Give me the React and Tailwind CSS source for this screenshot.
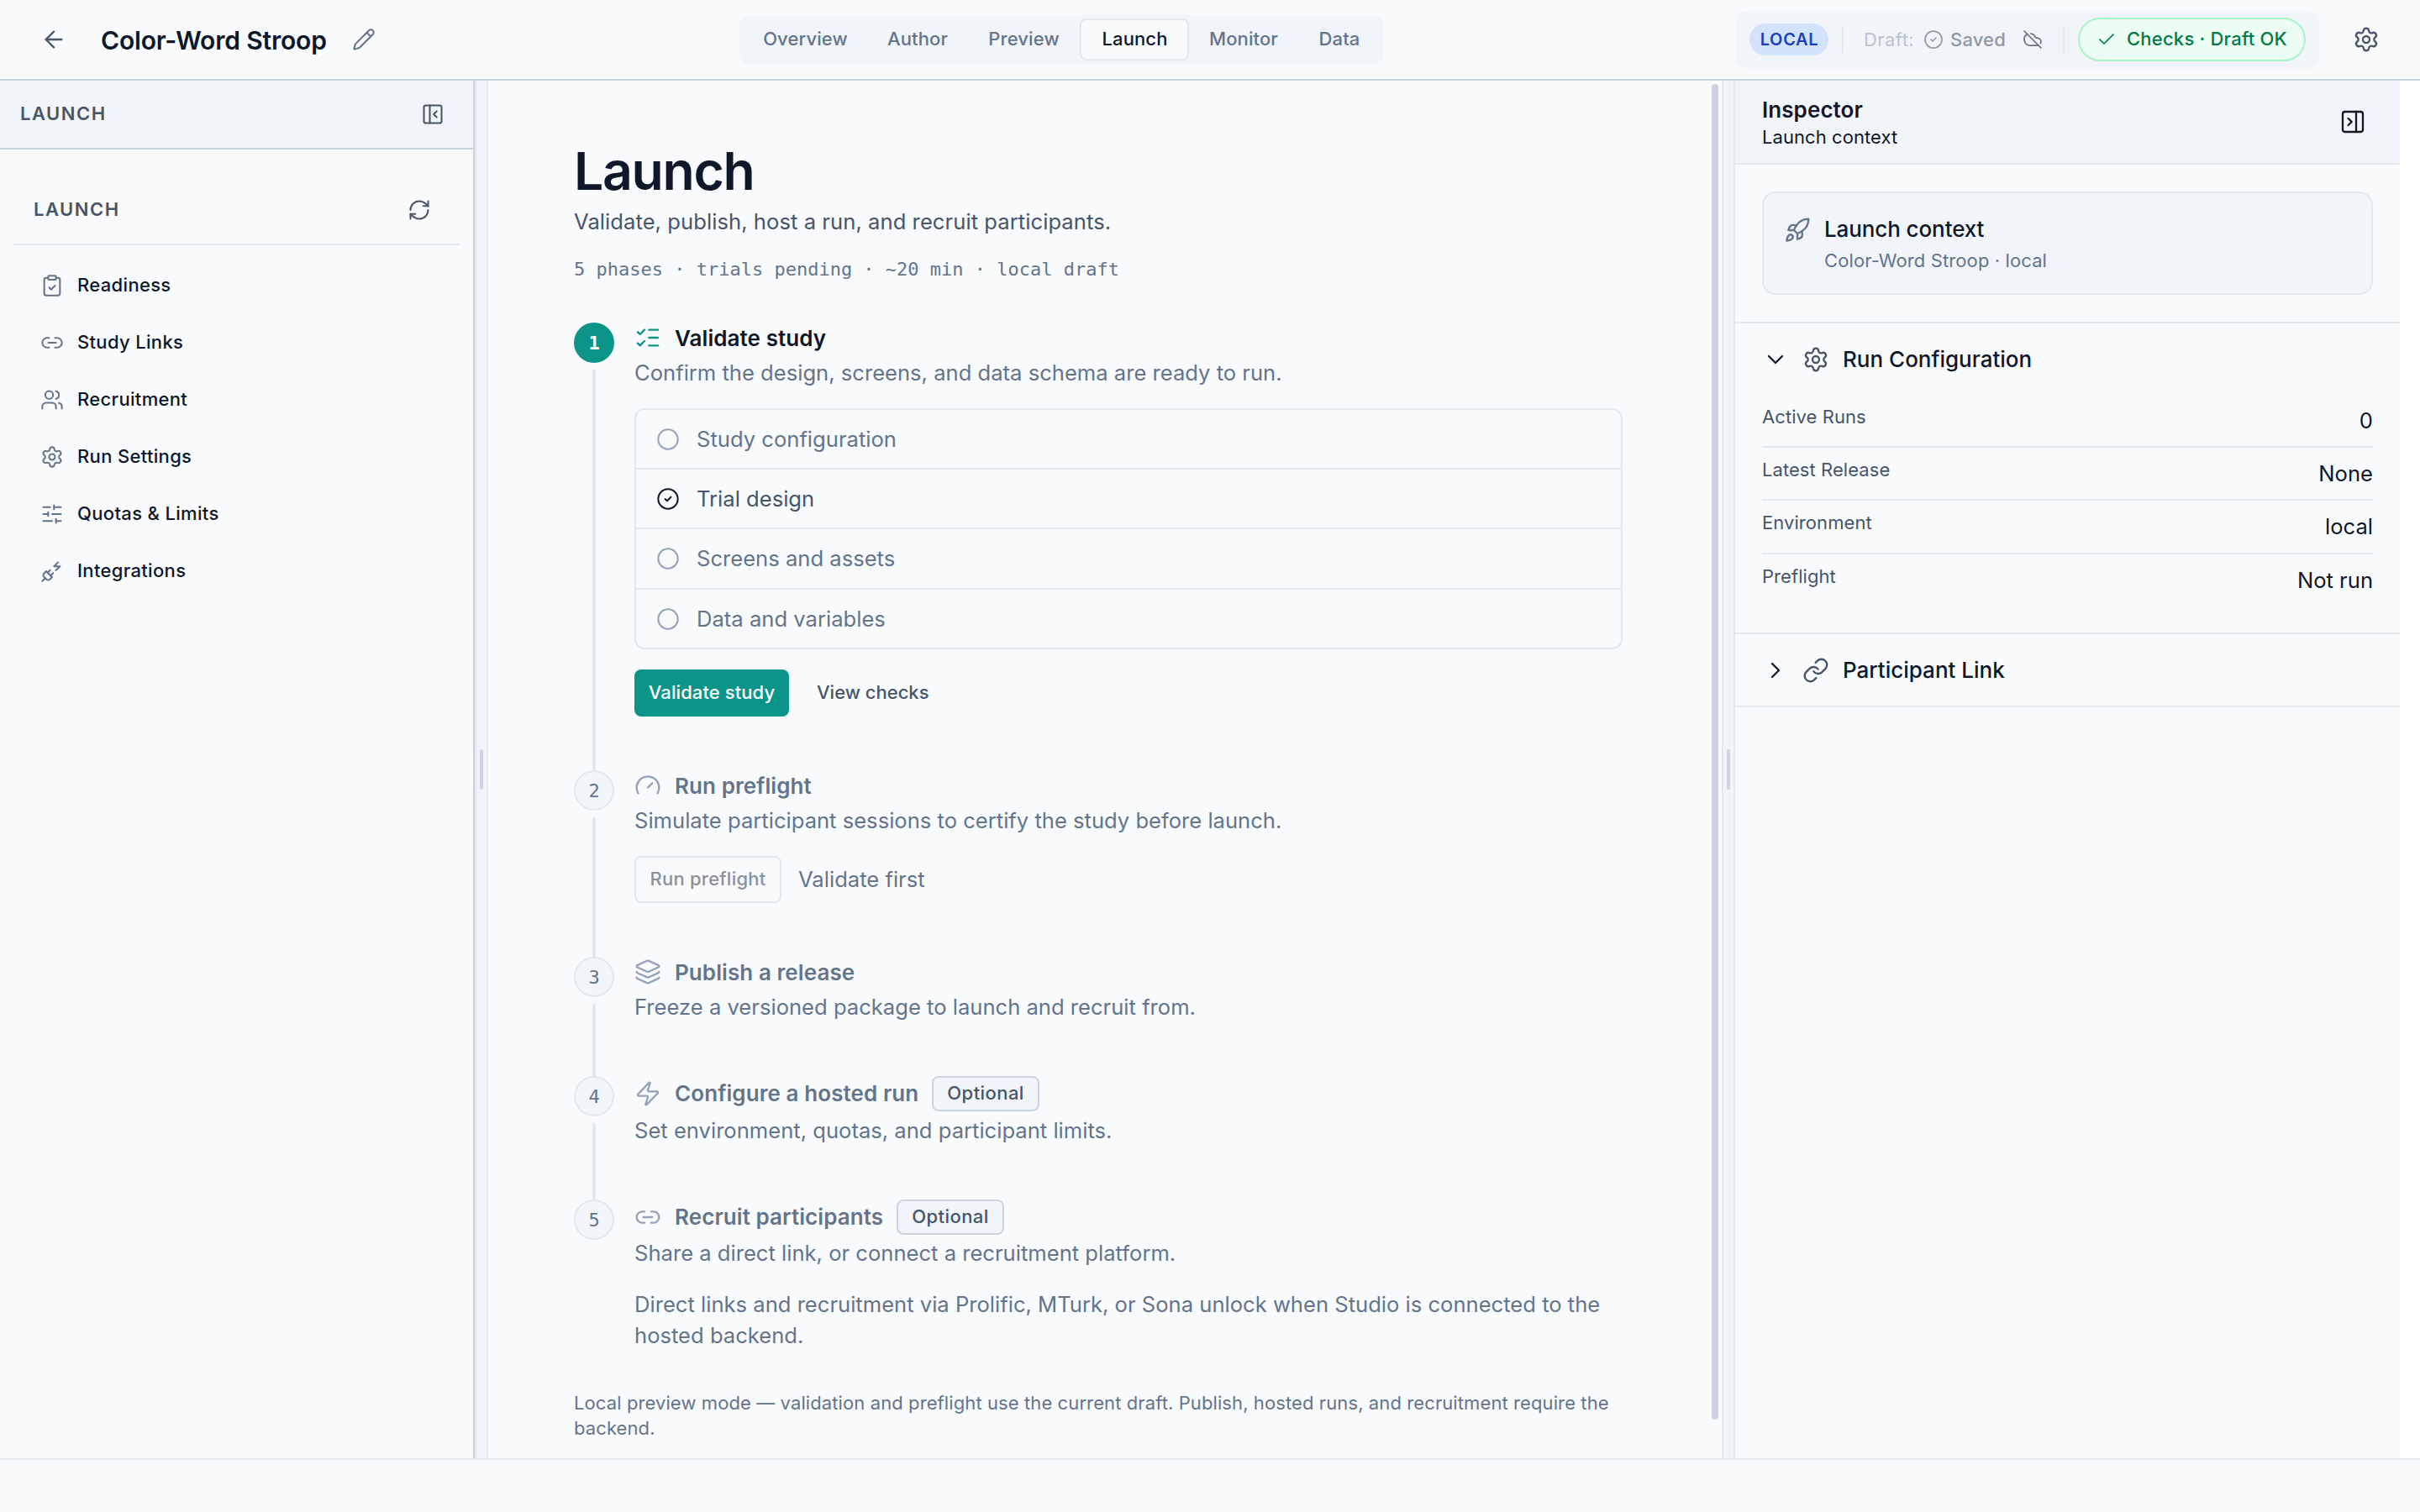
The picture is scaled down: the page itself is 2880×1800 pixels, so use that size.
import React from 'react';
import {
  ArrowLeft, Pencil, CircleCheck, CloudOff, Check, Settings, PanelLeftClose, RefreshCw,
  ClipboardCheck, Link2, Users, SlidersHorizontal, PlugZap, ListChecks, Circle, Gauge,
  Layers, Zap, PanelRightClose, Rocket, ChevronDown, ChevronRight, Link,
} from 'lucide-react';

const TABS = [
  { label: 'Overview', width: 'w-[148px]' },
  { label: 'Author', width: 'w-[119px]' },
  { label: 'Preview', width: 'w-[134px]' },
  { label: 'Launch', width: 'w-[130px]', active: true },
  { label: 'Monitor', width: 'w-[129px]' },
  { label: 'Data', width: 'w-[99px]' },
];

const NAV = [
  { label: 'Readiness', icon: ClipboardCheck },
  { label: 'Study Links', icon: Link2 },
  { label: 'Recruitment', icon: Users },
  { label: 'Run Settings', icon: Settings },
  { label: 'Quotas & Limits', icon: SlidersHorizontal },
  { label: 'Integrations', icon: PlugZap },
];

const CHECKS = [
  { label: 'Study configuration', row: 'h-[71px] border-b-2' },
  { label: 'Trial design', row: 'h-[71px] border-b-2', done: true },
  { label: 'Screens and assets', row: 'h-[72px] border-b-2' },
  { label: 'Data and variables', row: 'h-[69px]' },
];

const RUN_ROWS = [
  { label: 'Active Runs', value: '0', row: 'h-[63px] border-b-2' },
  { label: 'Latest Release', value: 'None', row: 'h-[63px] border-b-2' },
  { label: 'Environment', value: 'local', row: 'h-[64px] border-b-2' },
  { label: 'Preflight', value: 'Not run', row: 'h-[61px]' },
];

function Header() {
  return (
    <header className="flex h-24 shrink-0 items-center border-b-2 border-[#cbd5e1]">
      <div className="flex w-[880px] shrink-0 items-center pl-12">
        <ArrowLeft size={32} strokeWidth={1.75} className="text-[#475569]" />
        <h2 className="ml-10 pt-px text-[30px] leading-9 font-semibold tracking-[-0.006em] text-[#0f172a]">Color-Word Stroop</h2>
        <Pencil size={28} strokeWidth={1.75} className="ml-[30px] text-[#64748b]" />
      </div>
      <nav className="flex h-[58px] shrink-0 items-center rounded-xl bg-slate-100 px-1">
        {TABS.map((t) => (
          <div
            key={t.label}
            className={`flex h-[50px] items-center justify-center rounded-lg border-2 pb-px pl-px text-[22px] font-medium tracking-[0.005em] ${t.width} ${
              t.active ? 'border-slate-200 bg-slate-50 text-[#0f172a]' : 'border-transparent text-[#64748b]'
            }`}
          >
            {t.label}
          </div>
        ))}
      </nav>
      <div className="ml-auto flex h-[68px] shrink-0 items-center rounded-xl bg-slate-100 px-4">
        <div className="flex h-[38px] w-[94px] items-center justify-center rounded-full bg-[#d3e3fd] pl-px text-[20px] font-semibold tracking-[0.035em] text-[#1d3fbb]">
          LOCAL
        </div>
        <div className="ml-4 h-8 w-0.5 bg-slate-200" />
        <div className="ml-6 w-[71px] text-[22px] tracking-[0.02em] text-[#b9c3d1]">Draft:</div>
        <CircleCheck size={24} strokeWidth={1.75} className="text-[#949ba8]" />
        <div className="ml-2 w-[86px] text-[22px] font-medium tracking-[0.008em] text-[#8f98a7]">Saved</div>
        <CloudOff size={24} strokeWidth={1.75} className="text-[#6b7280]" />
        <div className="ml-6 h-8 w-0.5 bg-slate-200" />
        <div className="ml-4 flex h-[52px] w-[271px] items-center rounded-full border-2 border-[#a6f4c5] bg-[#ecfdf3] pl-5 text-[#027a48]">
          <Check size={24} strokeWidth={1.75} />
          <span className="ml-3 pb-px text-[22px] font-medium tracking-[0.01em]">Checks · Draft OK</span>
        </div>
      </div>
      <div className="flex w-[120px] shrink-0 pl-10">
        <Settings size={32} strokeWidth={1.75} className="text-[#475569]" />
      </div>
    </header>
  );
}

function Sidebar() {
  return (
    <aside className="flex w-[565px] shrink-0 flex-col border-r-2 border-[#cbd5e1]">
      <div className="flex h-[82px] items-center justify-between border-b-2 border-[#cbd5e1] bg-slate-100 pr-[34px] pl-6 text-[#475569]">
        <span className="pb-px text-[22px] font-semibold tracking-[0.069em]">LAUNCH</span>
        <PanelLeftClose size={28} strokeWidth={1.75} />
      </div>
      <div className="mx-4 mt-8 flex h-[82px] items-center justify-between border-b-2 border-slate-200 pr-[34px] pl-6 text-[#475569]">
        <span className="pb-px text-[22px] font-semibold tracking-[0.069em]">LAUNCH</span>
        <RefreshCw size={28} strokeWidth={1.75} />
      </div>
      <ul className="mt-4 flex flex-col gap-1 pl-12">
        {NAV.map(({ label, icon: Icon }) => (
          <li key={label} className="flex h-16 items-center gap-4">
            <Icon size={28} strokeWidth={1.75} className="text-[#64748b]" />
            <span className="pb-px text-[22px] font-medium tracking-[0.015em] text-[#0f172a]">{label}</span>
          </li>
        ))}
      </ul>
    </aside>
  );
}

function Divider() {
  return (
    <div className="flex w-4 shrink-0 items-center justify-center border-x-2 border-slate-200 bg-slate-100">
      <div className="h-12 w-1 rounded-full bg-[#cbd5e1]" />
    </div>
  );
}

function Step({ n, icon: Icon, title, desc, optional, active, last, children }) {
  return (
    <section className="flex gap-6">
      <div className="flex w-12 shrink-0 flex-col items-center">
        <div
          className={`flex size-12 shrink-0 items-center justify-center rounded-full font-['DejaVu_Sans_Mono',monospace] text-[22px] ${
            active ? 'bg-[#0d9488] font-bold text-white' : 'border-2 border-slate-200 bg-slate-100 text-[#64748b]'
          }`}
        >
          {n}
        </div>
        {!last && <div className="mt-2 w-1 grow bg-slate-200" />}
      </div>
      <div className={`grow ${last ? '' : 'pb-16'}`}>
        <div className={`flex items-center ${optional ? 'h-[41px]' : 'h-9'}`}>
          <Icon size={32} strokeWidth={1.75} className={active ? 'text-[#0d9488]' : 'text-[#94a3b8]'} />
          <h3
            className={`ml-4 text-[26px] leading-9 font-semibold tracking-[0.003em] ${optional ? '' : 'pt-0.5'} ${
              active ? 'text-[#0f172a]' : 'text-[#64748b]'
            }`}
          >
            {title}
          </h3>
          {optional && (
            <span className="ml-4 flex h-[42px] items-center rounded-lg border-2 border-[#cbd5e1] bg-slate-100 px-4 text-[22px] font-medium tracking-[0.02em] text-[#475569]">
              Optional
            </span>
          )}
        </div>
        <p className={`text-[25.6px] leading-[37px] text-[#64748b] ${last ? 'mt-1' : 'mt-[5px]'}`}>{desc}</p>
        {children}
      </div>
    </section>
  );
}

function Main() {
  return (
    <main className="flex w-[1468px] shrink-0">
      <div className="w-[1452px] pt-[73px] pr-[102px] pl-[102px]">
        <h1 className="text-[62.5px] leading-[68px] font-semibold tracking-[-0.021em] text-[#0f172a]">Launch</h1>
        <p className="mt-2 text-[25.6px] leading-[38px] tracking-[0.002em] text-[#475569]">
          Validate, publish, host a run, and recruit participants.
        </p>
        <p className="mt-[22px] font-['DejaVu_Sans_Mono',monospace] text-[22px] leading-8 text-[#64748b]">
          5 phases · trials pending · ~20 min · local draft
        </p>
        <div className="mt-[47px] flex flex-col">
          <Step n="1" icon={ListChecks} title="Validate study" desc="Confirm the design, screens, and data schema are ready to run." active>
            <div className="mt-6 rounded-xl border-2 border-slate-200">
              {CHECKS.map((c) => (
                <div key={c.label} className={`flex items-center gap-5 border-slate-200 pl-6 ${c.row}`}>
                  {c.done ? (
                    <CircleCheck size={28} strokeWidth={1.75} className="text-[#0f172a]" />
                  ) : (
                    <Circle size={28} strokeWidth={1.75} className="text-[#94a3b8]" />
                  )}
                  <span className={`text-[25.6px] leading-9 ${c.done ? 'text-[#475569]' : 'text-[#64748b]'}`}>{c.label}</span>
                </div>
              ))}
            </div>
            <div className="mt-6 flex">
              <div className="flex h-14 w-[184px] items-center justify-center rounded-lg bg-[#0d9488] pb-px text-[22px] font-medium tracking-[0.004em] text-white">
                Validate study
              </div>
              <div className="ml-[33px] flex h-14 items-center pb-px text-[22px] font-medium text-[#475569]">View checks</div>
            </div>
          </Step>
          <Step n="2" icon={Gauge} title="Run preflight" desc="Simulate participant sessions to certify the study before launch.">
            <div className="mt-6 flex items-center">
              <div className="flex h-14 w-[175px] items-center justify-center rounded-lg border-2 border-slate-200 pb-px text-[22px] font-medium tracking-[0.01em] text-[#8b909c]">
                Run preflight
              </div>
              <span className="ml-5 text-[25.6px] leading-9 text-[#64748b]">Validate first</span>
            </div>
          </Step>
          <Step n="3" icon={Layers} title="Publish a release" desc="Freeze a versioned package to launch and recruit from." />
          <Step n="4" icon={Zap} title="Configure a hosted run" desc="Set environment, quotas, and participant limits." optional />
          <Step n="5" icon={Link2} title="Recruit participants" desc="Share a direct link, or connect a recruitment platform." optional last>
            <p className="mt-6 text-[25.6px] leading-[37px] text-[#64748b]">
              Direct links and recruitment via Prolific, MTurk, or Sona unlock when Studio is connected to the hosted backend.
            </p>
          </Step>
        </div>
        <p className="mt-[47px] text-[22px] leading-[30px] tracking-[0.0045em] text-[#64748b]">
          Local preview mode — validation and preflight use the current draft. Publish, hosted runs, and recruitment require the backend.
        </p>
      </div>
      <div className="w-4 px-1 pt-1">
        <div className="h-[1590px] rounded-full bg-[#cbd5e1]" />
      </div>
    </main>
  );
}

function Inspector() {
  return (
    <aside className="flex w-[791px] shrink-0 flex-col text-[#0f172a]">
      <div className="flex h-[100px] shrink-0 items-center justify-between border-b-2 border-slate-200 bg-slate-100 pr-10 pl-8">
        <div>
          <div className="pt-px text-[26px] leading-[35px] font-semibold tracking-[0.003em]">Inspector</div>
          <div className="text-[22px] leading-[30px] tracking-[0.003em]">Launch context</div>
        </div>
        <PanelRightClose size={32} strokeWidth={1.75} />
      </div>
      <div className="mx-8 mt-8 flex h-[123px] shrink-0 gap-4 rounded-2xl border-2 border-slate-200 bg-slate-100 p-6">
        <Rocket size={32} strokeWidth={1.75} className="mt-1 text-[#64748b]" />
        <div>
          <div className="pt-px text-[26px] leading-9 font-medium tracking-[-0.004em]">Launch context</div>
          <div className="mt-1 text-[22px] leading-[30px] tracking-[0.005em] text-[#64748b]">Color-Word Stroop · local</div>
        </div>
      </div>
      <section className="mt-8 border-t-2 border-slate-200 px-8 pb-8">
        <div className="flex h-[85px] items-center gap-4">
          <ChevronDown size={32} strokeWidth={1.75} />
          <Settings size={32} strokeWidth={1.75} className="text-[#475569]" />
          <span className="text-[26px] leading-9 font-medium">Run Configuration</span>
        </div>
        {RUN_ROWS.map((r) => (
          <div key={r.label} className={`flex justify-between border-slate-200 pt-3 ${r.row}`}>
            <span className="text-[22px] leading-7 tracking-[0.003em] text-[#475569]">{r.label}</span>
            <span className="text-[25.6px] leading-[37px]">{r.value}</span>
          </div>
        ))}
      </section>
      <section className="flex h-[89px] items-center gap-4 border-y-2 border-slate-200 px-8">
        <ChevronRight size={32} strokeWidth={1.75} />
        <Link size={32} strokeWidth={1.75} className="text-[#475569]" />
        <span className="text-[26px] leading-9 font-medium">Participant Link</span>
      </section>
    </aside>
  );
}

export default function App() {
  return (
    <div className="flex h-[1800px] w-[2880px] flex-col overflow-hidden bg-slate-50 font-['Inter',sans-serif]">
      <Header />
      <div className="flex h-[1640px] shrink-0">
        <Sidebar />
        <Divider />
        <Main />
        <Divider />
        <Inspector />
        <div className="grow bg-white" />
      </div>
      <footer className="grow border-t-2 border-slate-200" />
    </div>
  );
}
